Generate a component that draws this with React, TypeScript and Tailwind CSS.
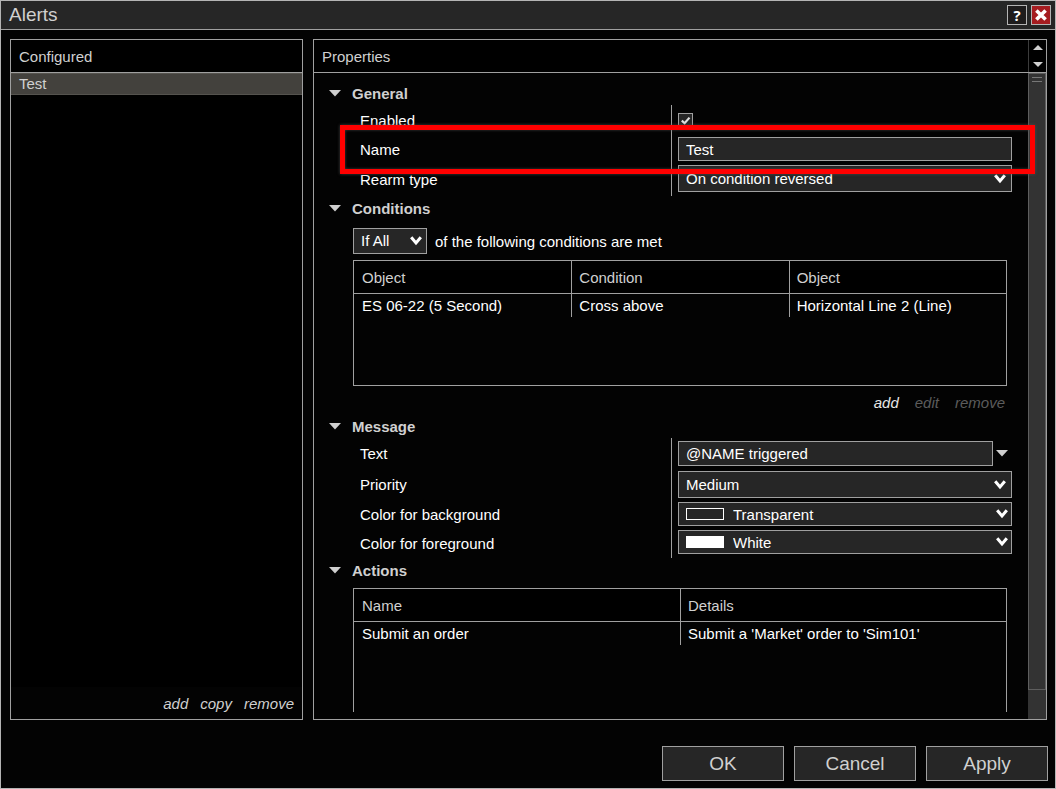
import React, { useState } from 'react';

type IconProps = { className?: string };

const TriangleDown: React.FC<IconProps> = ({ className }) => (
  <svg width="12" height="7" viewBox="0 0 12 7" className={className} aria-hidden="true">
    <path d="M0 0H12L6 6.6Z" fill="#d0d0d0" />
  </svg>
);

const Chevron: React.FC<IconProps> = ({ className }) => (
  <svg
    width="12"
    height="10"
    viewBox="0 0 12 10"
    className={`pointer-events-none absolute top-1/2 -translate-y-1/2 ${className ?? ''}`}
    aria-hidden="true"
  >
    <path d="M1.2 1.2L6 7L10.8 1.2" fill="none" stroke="#fff" strokeWidth="3" />
  </svg>
);

type SelectBoxProps = { id: string; value: string; className: string; label?: string };

const SelectBox: React.FC<SelectBoxProps> = ({ id, value, className, label }) => (
  <div className={`relative ${className}`}>
    <select
      id={id}
      aria-label={label}
      className="block h-full w-full appearance-none border border-[#a0a0a0] bg-[#262626] pr-6 pl-[7px] text-white outline-none"
    >
      <option>{value}</option>
    </select>
    <Chevron className={label ? 'right-[5px]' : 'right-1.5'} />
  </div>
);

type ColorSelectProps = { id: string; value: string; swatch: string };

const ColorSelect: React.FC<ColorSelectProps> = ({ id, value, swatch }) => (
  <div className="relative flex h-6 flex-1 items-center border border-[#a0a0a0] bg-[#262626] pl-[7px]">
    <span className={`h-3 w-[38px] shrink-0 border border-white ${swatch}`} />
    <select
      id={id}
      className="h-full min-w-0 flex-1 appearance-none bg-transparent pt-px pr-6 pl-[9px] text-white outline-none"
    >
      <option>{value}</option>
    </select>
    <Chevron className="right-[3px]" />
  </div>
);

type PropertyRowProps = { id: string; label: string; className?: string; children: React.ReactNode };

const PropertyRow: React.FC<PropertyRowProps> = ({ id, label, className = '', children }) => (
  <div className={`grid grid-cols-2 last:[&>div]:pb-1 ${className}`}>
    <label htmlFor={id} className="flex items-center pt-px pl-[30px]">
      {label}
    </label>
    <div className="flex items-center border-l border-[#a0a0a0] py-0.5 pl-1.5">{children}</div>
  </div>
);

type SectionProps = { title: string; children: React.ReactNode };

const Section: React.FC<SectionProps> = ({ title, children }) => {
  const [open, setOpen] = useState(true);

  return (
    <section>
      <button
        type="button"
        aria-expanded={open}
        onClick={() => setOpen(!open)}
        className="flex h-6 items-center gap-[11px] font-bold text-[#d0d0d0]"
      >
        <TriangleDown className={open ? '-ml-px' : '-ml-px -rotate-90'} />
        <span className="pt-0.5">{title}</span>
      </button>
      {open && <div>{children}</div>}
    </section>
  );
};

type DataGridProps = { columns: string[]; rows: string[][] };

const DataGrid: React.FC<DataGridProps> = ({ columns, rows }) => (
  <div className="h-[126px] border border-[#a0a0a0]">
    <table className="w-full table-fixed border-separate border-spacing-0">
      <thead>
        <tr className="h-[33px] bg-black text-left text-[#d0d0d0]">
          {columns.map((column, i) => (
            <th
              key={i}
              className="border-b border-l border-[#a0a0a0] pt-0.5 pl-[7px] font-normal first:border-l-0 first:pl-2"
            >
              {column}
            </th>
          ))}
        </tr>
      </thead>
      <tbody>
        {rows.map((row, i) => (
          <tr key={i} className="h-[23px]">
            {row.map((cell, j) => (
              <td key={j} className="border-l border-[#a0a0a0] pl-[7px] first:border-l-0 first:pl-2">
                {cell}
              </td>
            ))}
          </tr>
        ))}
      </tbody>
    </table>
  </div>
);

const ConfiguredPanel: React.FC = () => (
  <aside className="flex w-[293px] shrink-0 flex-col border border-[#a0a0a0] bg-black">
    <h2 className="flex h-[33px] items-center border-b border-[#a0a0a0] px-2 pt-px">Configured</h2>
    <ul className="flex-1">
      <li className="h-[22px] border-y border-[#55534e] bg-[#43413d] px-2 leading-5">Test</li>
    </ul>
    <div className="flex h-8 items-center justify-end gap-3 bg-[#030303] px-2 pt-0.5 italic">
      <button type="button">add</button>
      <button type="button">copy</button>
      <button type="button">remove</button>
    </div>
  </aside>
);

const PropertiesPanel: React.FC = () => (
  <main className="flex min-w-0 flex-1 flex-col border border-[#a0a0a0]">
    <div className="flex h-[33px] shrink-0 border-b border-[#a0a0a0] bg-black">
      <h2 className="flex flex-1 items-center px-2 pt-px">Properties</h2>
      <div className="flex w-[18px] flex-col items-center justify-between border-l border-[#3c3c3c] py-[5px]">
        <button type="button" aria-label="Scroll up">
          <svg width="10" height="5" viewBox="0 0 10 5" className="block">
            <path d="M0 5L5 0L10 5Z" fill="#d0d0d0" />
          </svg>
        </button>
        <button type="button" aria-label="Scroll down">
          <svg width="10" height="5" viewBox="0 0 10 5" className="block">
            <path d="M0 0L5 5L10 0Z" fill="#d0d0d0" />
          </svg>
        </button>
      </div>
    </div>

    <div className="relative flex min-h-0 flex-1">
      <div className="mb-[7px] min-w-0 flex-1 overflow-hidden px-4 pt-2 text-white">
        <Section title="General">
          <PropertyRow id="enabled" label="Enabled" className="h-[30px]">
            <span className="relative block size-[15px]">
              <input
                id="enabled"
                type="checkbox"
                defaultChecked
                className="peer block size-[15px] appearance-none border border-[#a0a0a0] bg-[#262626]"
              />
              <svg
                viewBox="0 0 15 15"
                className="pointer-events-none absolute inset-0 hidden peer-checked:block"
                aria-hidden="true"
              >
                <path d="M3.8 7.6L6.6 10.2L11.5 4.6" fill="none" stroke="#e0e0e0" strokeWidth="2.2" />
              </svg>
            </span>
          </PropertyRow>
          <PropertyRow id="name" label="Name">
            <input
              id="name"
              type="text"
              defaultValue="Test"
              className="h-6 min-w-0 flex-1 border border-[#a0a0a0] bg-[#262626] px-[7px] text-white outline-none"
            />
          </PropertyRow>
          <PropertyRow id="rearm" label="Rearm type">
            <SelectBox id="rearm" value="On condition reversed" className="h-[27px] flex-1" />
          </PropertyRow>
        </Section>

        <Section title="Conditions">
          <div className="mr-[5px] ml-[23px] pt-2">
            <div className="mb-1.5 flex items-center gap-2">
              <SelectBox id="match" value="If All" label="Match" className="h-[26px] w-[74px]" />
              <span className="pt-px">of the following conditions are met</span>
            </div>
            <DataGrid
              columns={['Object', 'Condition', 'Object']}
              rows={[['ES 06-22 (5 Second)', 'Cross above', 'Horizontal Line 2 (Line)']]}
            />
            <div className="flex h-7 items-center justify-end gap-4 pt-1.5 pr-0.5 text-[#e8e8e8] italic">
              <button type="button">add</button>
              <button type="button" disabled className="text-[#5c5c5c]">
                edit
              </button>
              <button type="button" disabled className="text-[#5c5c5c]">
                remove
              </button>
            </div>
          </div>
        </Section>

        <Section title="Message">
          <PropertyRow id="text" label="Text" className="h-[31px]">
            <input
              id="text"
              type="text"
              defaultValue="@NAME triggered"
              className="h-[25px] min-w-0 flex-1 border border-[#a0a0a0] bg-[#262626] px-[7px] text-white outline-none"
            />
            <button type="button" aria-label="Insert variable" className="w-[19px] pl-[3px]">
              <TriangleDown />
            </button>
          </PropertyRow>
          <PropertyRow id="priority" label="Priority">
            <SelectBox id="priority" value="Medium" className="h-[27px] flex-1" />
          </PropertyRow>
          <PropertyRow id="background" label="Color for background">
            <ColorSelect id="background" value="Transparent" swatch="bg-transparent" />
          </PropertyRow>
          <PropertyRow id="foreground" label="Color for foreground">
            <ColorSelect id="foreground" value="White" swatch="bg-white" />
          </PropertyRow>
        </Section>

        <Section title="Actions">
          <div className="mr-[5px] ml-[23px] pt-1.5">
            <DataGrid
              columns={['Name', 'Details']}
              rows={[['Submit an order', "Submit a 'Market' order to 'Sim101'"]]}
            />
          </div>
        </Section>
      </div>

      {/* Scrollbar */}
      <div className="w-[18px] shrink-0 bg-[#333]">
        <div className="h-[calc(100%-29px)] border border-[#5e5e5e] px-[3px] pt-[3px]">
          <div className="h-[5px] border-y border-[#777]" />
        </div>
      </div>

      {/* Highlight around the Name row */}
      <div className="pointer-events-none absolute top-[52px] right-[11px] left-[26px] h-[49px] border-5 border-[#ff0000] shadow-[0_0_3px_rgba(80,80,80,0.8),inset_0_0_3px_rgba(80,80,80,0.8)]" />
    </div>
  </main>
);

const DialogButton: React.FC<{ label: string }> = ({ label }) => (
  <button type="button" className="h-[35px] w-[122px] border border-[#a0a0a0] bg-[#262626] text-[19px]">
    {label}
  </button>
);

export default function App() {
  return (
    <div className="flex h-screen flex-col border border-[#b4b4b4] bg-[#030303] font-['Liberation_Sans',Arial,sans-serif] text-[15px] leading-5 text-[#d0d0d0]">
      <header className="flex h-[29px] shrink-0 items-center gap-1 border-b border-[#a0a0a0] bg-[#262626] pr-1 pl-2">
        <h1 className="flex-1 text-[19px]">Alerts</h1>
        <button
          type="button"
          aria-label="Help"
          className="flex size-5 items-center justify-center border border-[#b4b4b4] bg-[#1e1c1c] font-['Open_Sans',sans-serif] font-bold text-white"
        >
          ?
        </button>
        <button
          type="button"
          aria-label="Close"
          className="flex size-5 items-center justify-center border border-[#b4b4b4] bg-[#a51c20]"
        >
          <svg width="12" height="12" viewBox="0 0 12 12" aria-hidden="true">
            <path d="M1.4 1.4L10.6 10.6M10.6 1.4L1.4 10.6" stroke="#fff" strokeWidth="3.6" />
          </svg>
        </button>
      </header>

      <div className="flex min-h-0 flex-1 gap-2.5 pt-[9px] pr-2 pl-[9px]">
        <ConfiguredPanel />
        <PropertiesPanel />
      </div>

      <footer className="flex shrink-0 justify-end gap-2.5 pt-[26px] pr-[7px] pb-[7px]">
        <DialogButton label="OK" />
        <DialogButton label="Cancel" />
        <DialogButton label="Apply" />
      </footer>
    </div>
  );
}
